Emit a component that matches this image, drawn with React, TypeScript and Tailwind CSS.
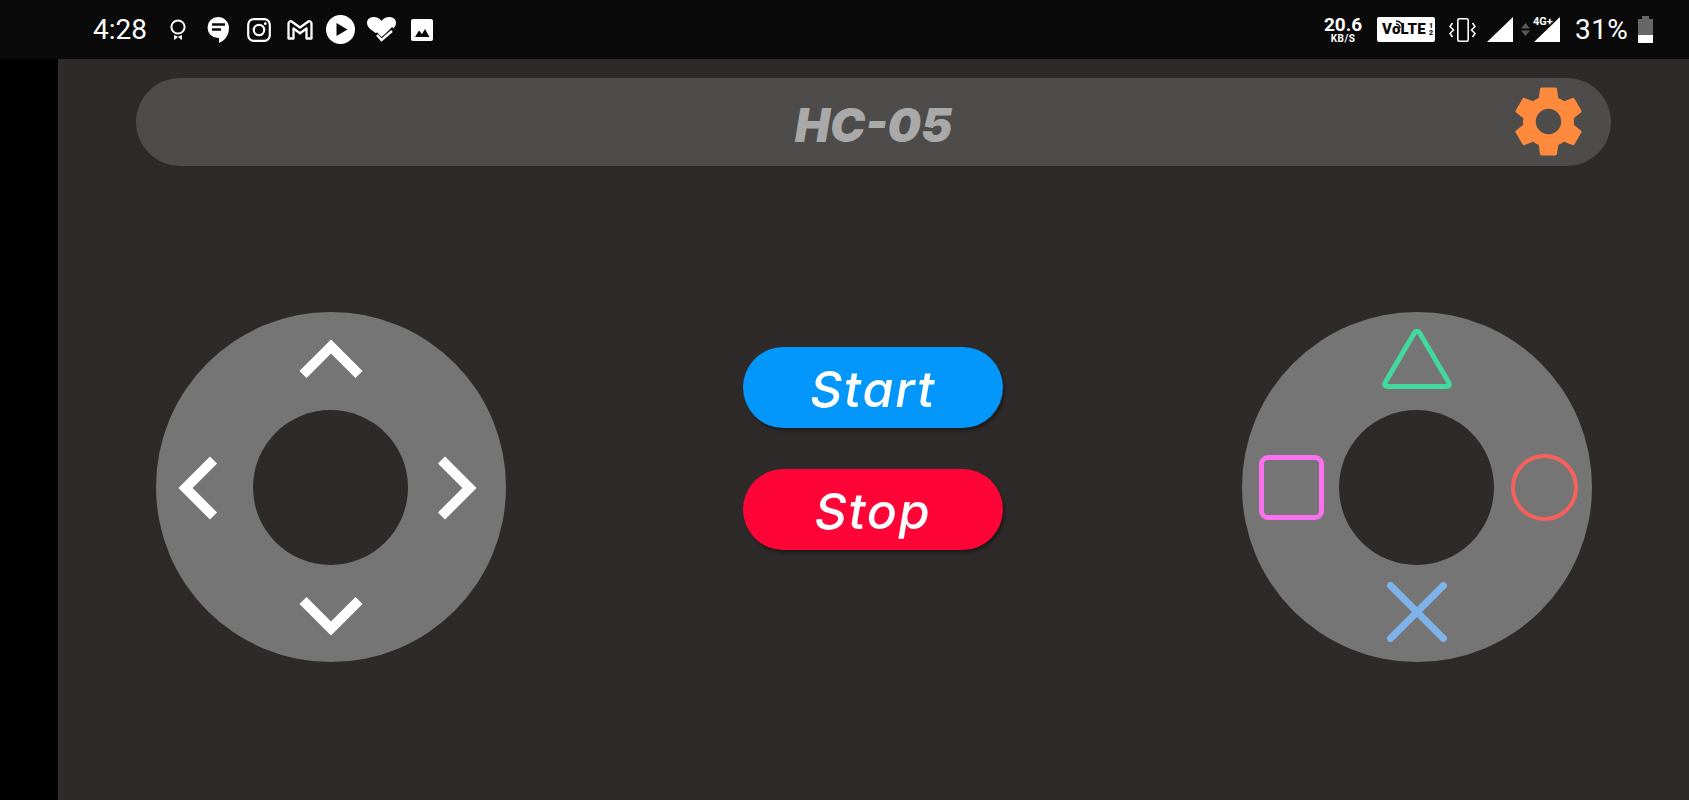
import { MdSettings } from 'react-icons/md';

const ROBOTO = "font-['Roboto',sans-serif]";

function LeftStatusIcons() {
    return (
        <div className="flex items-center">
            {/* ribbon */}
            <svg width="16" height="21" viewBox="0 0 16 21" className="ml-[22px]">
                <circle cx="8" cy="8" r="6.6" fill="none" stroke="#fff" strokeWidth="2" />
                <path d="M4.500 16.500L7.500 18 4.500 20.500zM11.500 16.500L8.500 18l3 2.500z" fill="#fff" stroke="#fff" strokeWidth="0.8" />
            </svg>
            {/* chat */}
            <svg width="22" height="26" viewBox="0 0 22 26" className="ml-[21px]">
                <path d="M11 0a10.500 10.500 0 0 0 0 21h1v5c5-2 10-7 10-15A11 11 0 0 0 11 0z" fill="#fff" />
                <path d="M5 7.500h13M5 12.500h9" stroke="#0a0a0a" strokeWidth="2.500" />
            </svg>
            {/* instagram */}
            <svg width="24" height="24" viewBox="0 0 24 24" className="ml-[18px]">
                <rect x="1.200" y="1.200" width="21.600" height="21.600" rx="5.500" fill="none" stroke="#fff" strokeWidth="2.200" />
                <circle cx="12" cy="12" r="5.200" fill="none" stroke="#fff" strokeWidth="2.200" />
                <circle cx="18.300" cy="5.700" r="1.400" fill="#fff" />
            </svg>
            {/* gmail */}
            <svg width="26" height="20" viewBox="0 0 26 20" className="ml-[16px]">
                <path d="M1.500 18.500V3.500c0-2 2-2.800 3.500-1.800L13 7.500l8-5.800c1.500-1 3.500-.2 3.500 1.800v15h-5V8.500L13 13.200 6.500 8.500v10z" fill="none" stroke="#fff" strokeWidth="2.300" strokeLinejoin="round" />
            </svg>
            {/* play */}
            <svg width="29" height="29" viewBox="0 0 29 29" className="ml-[13px]">
                <circle cx="14.500" cy="14.500" r="14.500" fill="#fff" />
                <path d="M10.500 8l11 6.500-11 6.500z" fill="#0a0a0a" />
            </svg>
            {/* heart with check */}
            <svg width="29" height="26" viewBox="0 0 29 26" className="ml-[12px]">
                <path d="M14.500 20C9 15.500 0 12 0 6c0-7 10.500-8 14.500-2 4-6 14.500-5 14.500 2 0 6-9 9.500-14.500 14z" fill="#fff" />
                <path d="M8 17l6.500 7.500L27 12" fill="none" stroke="#0a0a0a" strokeWidth="5.500" />
                <path d="M10 18l4.500 5L25 14" fill="none" stroke="#fff" strokeWidth="2.400" />
            </svg>
            {/* image */}
            <svg width="22" height="22" viewBox="0 0 22 22" className="ml-[15px]">
                <rect width="22" height="22" rx="2" fill="#fff" />
                <path d="M4 18l4-6.500 3 3.500 3-5 4.500 8z" fill="#0a0a0a" />
            </svg>
        </div>
    );
}

function RightStatus() {
    return (
        <div className={`mr-[36px] ml-auto flex items-center ${ROBOTO}`}>
            <div className="flex w-[36px] flex-col items-center font-bold whitespace-nowrap text-white">
                <span className="text-[19px] leading-[17px]">20.6</span>
                <span className="text-[10px] leading-[11px] tracking-[0.5px]">KB/S</span>
            </div>
            <div className="relative ml-[16px] flex h-[25px] w-[58px] items-center rounded-[2px] bg-white pl-[5px] text-[15px] font-black text-[#0a0a0a]">
                <span className="tracking-[0.3px]">VoLTE</span>
                <svg width="9" height="9" viewBox="0 0 9 9" className="absolute top-[3px] left-[18px]">
                    <path d="M1 4a4 4 0 0 1 4 4M1 1a7 7 0 0 1 7 7" fill="none" stroke="#0a0a0a" strokeWidth="1.400" />
                </svg>
                <span className="ml-[3px] flex flex-col text-[7px] leading-[7px]">
                    <span>1</span>
                    <span>2</span>
                </span>
            </div>
            {/* vibrate */}
            <svg width="27" height="24" viewBox="0 0 27 24" className="ml-[14px]">
                <rect x="8.800" y="0.800" width="10.400" height="22.400" rx="1.500" fill="none" stroke="#fff" strokeWidth="1.600" />
                <path d="M3.500 5L1 8.500l3.500 3.500L1 15.500 3.500 19M23.500 5L26 8.500 22.500 12l3.500 3.500-2.500 3.500" fill="none" stroke="#fff" strokeWidth="1.500" />
            </svg>
            {/* signal */}
            <svg width="26" height="25" viewBox="0 0 26 25" className="ml-[11px]">
                <path d="M0 25L26 0v25z" fill="#fff" />
            </svg>
            {/* up/down */}
            <svg width="9" height="13" viewBox="0 0 9 13" className="ml-[8px]">
                <path d="M4.500 0L9 5.500H0zM4.500 13L0 7.500h9z" fill="#5a5a5a" />
            </svg>
            <div className="relative ml-[4px] h-[25px] w-[26px]">
                <svg width="26" height="25" viewBox="0 0 26 25">
                    <path d="M0 25L26 0v25z" fill="#fff" />
                </svg>
                <span className="absolute -top-[3px] -left-[1px] text-[11px] font-bold text-white">4G+</span>
            </div>
            <span className="ml-[15px] w-[53px] text-[28px] leading-none tracking-[0.4px] whitespace-nowrap text-white">31%</span>
            <div className="ml-[10px] flex h-[27px] w-[15px] flex-col items-center">
                <div className="h-[3px] w-[7px] bg-[#666666]" />
                <div className="h-[16px] w-full bg-[#666666]" />
                <div className="h-[8px] w-full bg-white" />
            </div>
        </div>
    );
}

function Dpad() {
    return (
        <div className="grid h-[350px] w-[350px] grid-cols-[97px_155px_98px] grid-rows-[98px_155px_97px] items-center justify-items-center rounded-full bg-[#757575]">
            <div />
            <svg width="64" height="40" viewBox="0 0 64 40" className="mb-[4px]">
                <path d="M4 35.500L32 7.500l28 28" fill="none" stroke="#fff" strokeWidth="10" />
            </svg>
            <div />
            <svg width="40" height="64" viewBox="0 0 40 64" className="mr-[13px]">
                <path d="M35.500 4L7.500 32l28 28" fill="none" stroke="#fff" strokeWidth="10" />
            </svg>
            <div className="h-[155px] w-[155px] rounded-full bg-[#2e2a2a]" />
            <svg width="40" height="64" viewBox="0 0 40 64">
                <path d="M4.500 4l28 28-28 28" fill="none" stroke="#fff" strokeWidth="10" />
            </svg>
            <div />
            <svg width="64" height="40" viewBox="0 0 64 40" className="mt-[4px]">
                <path d="M4 4.500l28 28 28-28" fill="none" stroke="#fff" strokeWidth="10" />
            </svg>
            <div />
        </div>
    );
}

function ShapePad() {
    return (
        <div className="grid h-[350px] w-[350px] grid-cols-[97px_155px_98px] grid-rows-[98px_155px_97px] items-center justify-items-center rounded-full bg-[#757575]">
            <div />
            <svg width="70" height="61" viewBox="0 0 70 61" className="mb-[6px]">
                <path d="M32 5.500Q35 1 38 5.500L66.500 54Q69 58.500 64 58.500H6Q1 58.500 3.500 54Z" fill="none" stroke="#43d89e" strokeWidth="5" />
            </svg>
            <div />
            <div className="ml-[2px] h-[65px] w-[65px] rounded-[9px] border-[5px] border-[#fb70ee]" />
            <div className="h-[155px] w-[155px] rounded-full bg-[#2e2a2a]" />
            <div className="ml-[2px] h-[67px] w-[67px] rounded-full border-[4.500px] border-[#f5625c]" />
            <div />
            <svg width="60" height="60" viewBox="0 0 60 60" className="mb-[4px]">
                <path d="M3.500 3.500l53 53M56.500 3.500l-53 53" fill="none" stroke="#7eb3ea" strokeWidth="7" strokeLinecap="round" />
            </svg>
            <div />
        </div>
    );
}

export default function App() {
    return (
        <div className="flex h-[800px] flex-col overflow-hidden bg-black font-['Inter','Liberation_Sans',sans-serif]">
            <div className="flex h-[59px] shrink-0 items-center bg-[#0a0a0a] pl-[93px]">
                <span className={`w-[55px] text-[28px] whitespace-nowrap text-white ${ROBOTO}`}>4:28</span>
                <LeftStatusIcons />
                <RightStatus />
            </div>
            <div className="flex flex-1">
                <div className="w-[58px] shrink-0 bg-black" />
                <main className="flex flex-1 flex-col bg-[#2e2a2a] px-[78px] pt-[19px]">
                    <div className="relative flex h-[88px] items-center justify-center rounded-full bg-[#4d4c4a] pt-[6px]">
                        <span className="text-[47px] font-black text-[#a9a9a9] italic">HC-05</span>
                        <MdSettings className="absolute top-[1px] right-[20px] text-[#ff8a3d]" size={85} />
                    </div>
                    <div className="mt-[146px] mr-[19px] ml-[20px] flex items-start justify-between">
                        <Dpad />
                        <div className="mt-[35px] mr-[2px] flex flex-col gap-[41px]">
                            <button className="h-[81px] w-[260px] rounded-full bg-[#0497fb] pt-[3px] text-[50px] font-medium tracking-[1.8px] text-white italic shadow-[2px_3px_3px_rgba(0,0,0,0.35)]">
                                Start
                            </button>
                            <button className="h-[81px] w-[260px] rounded-full bg-[#ff0537] pt-[3px] text-[50px] font-medium tracking-[1.8px] text-white italic shadow-[2px_3px_3px_rgba(0,0,0,0.35)]">
                                Stop
                            </button>
                        </div>
                        <ShapePad />
                    </div>
                </main>
            </div>
        </div>
    );
}
